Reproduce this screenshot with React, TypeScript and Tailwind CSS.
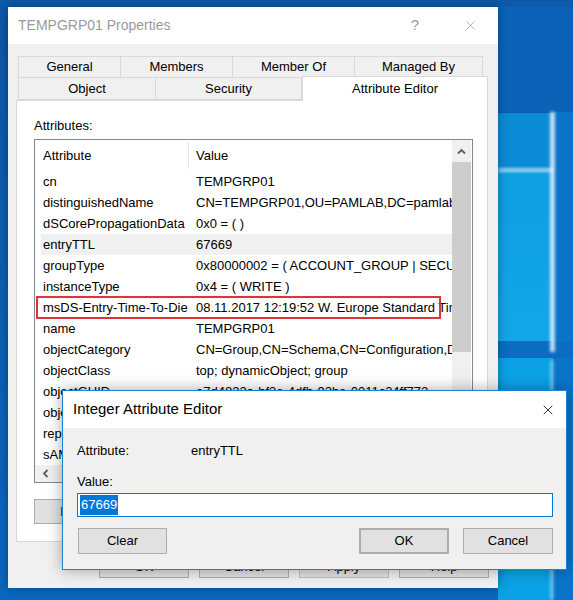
import { X } from "lucide-react";

const rows: [string, string][] = [
  ["cn", "TEMPGRP01"],
  ["distinguishedName", "CN=TEMPGRP01,OU=PAMLAB,DC=pamlab,DC=lab"],
  ["dSCorePropagationData", "0x0 = ( )"],
  ["entryTTL", "67669"],
  ["groupType", "0x80000002 = ( ACCOUNT_GROUP | SECURITY_ENABLED )"],
  ["instanceType", "0x4 = ( WRITE )"],
  ["msDS-Entry-Time-To-Die", "08.11.2017 12:19:52 W. Europe Standard Time"],
  ["name", "TEMPGRP01"],
  ["objectCategory", "CN=Group,CN=Schema,CN=Configuration,DC=pamlab,DC=lab"],
  ["objectClass", "top; dynamicObject; group"],
  ["objectGUID", "e7d4833a-bf3e-4dfb-93be-0011c34ff772"],
  ["objectSid", "S-1-5-21-3624189472-2017415611-1104"],
  ["replPropertyMetaData", "AttID  Ver  Loc.USN"],
  ["sAMAccountName", "TEMPGRP01"],
];

const topTabs = [
  { label: "General", w: "w-[103px]" },
  { label: "Members", w: "w-[113px]" },
  { label: "Member Of", w: "w-[123px]" },
  { label: "Managed By", w: "w-[129px]" },
];

function Wallpaper() {
  return (
    <svg className="absolute inset-0" width="573" height="600" viewBox="0 0 573 600">
      <defs>
        <linearGradient id="bg" x1="0" y1="0" x2="0" y2="1">
          <stop offset="0" stopColor="#0d58a8" />
          <stop offset="1" stopColor="#0a68c0" />
        </linearGradient>
        <linearGradient id="pane" x1="0" y1="0" x2="0" y2="1">
          <stop offset="0" stopColor="#0e9fe2" />
          <stop offset="1" stopColor="#12a6e8" />
        </linearGradient>
        <filter id="glow" x="-50%" y="-50%" width="200%" height="200%">
          <feGaussianBlur stdDeviation="1.6" />
        </filter>
      </defs>
      <rect width="573" height="600" fill="url(#bg)" />
      <rect x="498" y="0" width="75" height="112" fill="#0b62b6" />
      <rect x="553" y="112" width="20" height="488" fill="#0a74c9" />
      <rect x="498" y="113" width="55" height="58" fill="#0b8bd6" />
      <rect x="498" y="171" width="55" height="170" fill="url(#pane)" />
      <rect x="498" y="341" width="75" height="17" fill="#0a6dc2" />
      <rect x="498" y="358" width="55" height="242" fill="#0aa2e5" />
      <rect x="550" y="112" width="5" height="240" fill="#ffffff" opacity="0.75" filter="url(#glow)" />
      <rect x="498" y="168" width="55" height="4" fill="#ffffff" opacity="0.6" filter="url(#glow)" />
      <rect x="550" y="360" width="4" height="240" fill="#ffffff" opacity="0.35" filter="url(#glow)" />
      <rect x="0" y="0" width="573" height="7" fill="#0c5aa9" />
    </svg>
  );
}

function Btn({ label, className = "" }: { label: string; className?: string }) {
  return (
    <div
      className={`flex h-full items-center justify-center border border-[#adadad] bg-[#e1e1e1] text-[13px] text-black ${className}`}
    >
      {label}
    </div>
  );
}

function Chevron({ dir }: { dir: "up" | "left" }) {
  return (
    <svg width="9" height="9" viewBox="0 0 9 9" className={dir === "left" ? "-rotate-90" : ""}>
      <path d="M1 6.5 L4.5 3 L8 6.5" fill="none" stroke="#606060" strokeWidth="1.8" />
    </svg>
  );
}

function AttributeList() {
  return (
    <div className="flex h-[344px] w-[439px] flex-col border border-[#828790] bg-white">
      <div className="flex min-h-0 flex-1">
        <div className="flex w-[417px] flex-col overflow-hidden">
          {/* header */}
          <div className="flex h-[31px] shrink-0 items-center text-[13px]">
            <div className="w-[153px] pl-[8px]">Attribute</div>
            <div className="h-[27px] w-px bg-[#e5e5e5]" />
            <div className="pl-[7px]">Value</div>
          </div>
          {/* rows */}
          <div className="ml-[6px] flex flex-col">
            {rows.map(([attr, value]) => (
              <div
                key={attr}
                className={`relative flex h-[21px] shrink-0 items-center whitespace-nowrap text-[13px] ${
                  attr === "entryTTL" ? "bg-[#f0f0f0]" : ""
                }`}
              >
                <div className="w-[147px] shrink-0 pl-[2px]">{attr}</div>
                <div className="overflow-hidden pl-[8px]">{value}</div>
                {attr === "msDS-Entry-Time-To-Die" && (
                  <div className="absolute left-[-5px] top-[-1px] h-[23px] w-[405px] border-2 border-[#e0313c]" />
                )}
              </div>
            ))}
          </div>
        </div>
        {/* vertical scrollbar */}
        <div className="mr-px flex w-[19px] flex-col bg-[#f0f0f0]">
          <div className="flex h-[22px] items-center justify-center">
            <Chevron dir="up" />
          </div>
          <div className="h-[190px] bg-[#cdcdcd]" />
        </div>
      </div>
      {/* horizontal scrollbar */}
      <div className="flex h-[17px] shrink-0 items-center bg-[#f0f0f0] pl-[6px]">
        <Chevron dir="left" />
      </div>
    </div>
  );
}

function PropertiesWindow() {
  return (
    <div className="absolute left-[8px] top-[7px] flex h-[581px] w-[490px] flex-col shadow-[0_0_10px_rgba(0,0,0,0.35)]">
      {/* title bar */}
      <div className="flex h-[37px] shrink-0 items-center bg-white pl-[10px]">
        <span className="text-[14px] text-[#9a9a9a]">TEMPGRP01 Properties</span>
        <div className="ml-auto mr-[5px] flex h-full gap-[9px]">
          <div className="flex w-[46px] items-center justify-center text-[15px] text-[#9a9a9a]">?</div>
          <div className="flex w-[46px] items-center justify-center">
            <X className="h-[15px] w-[15px] text-[#9a9a9a]" strokeWidth={1.2} />
          </div>
        </div>
      </div>
      {/* body */}
      <div className="flex flex-1 flex-col bg-[#f0f0f0] pt-[12px]">
        <div className="ml-[10px] flex h-[22px]">
          {topTabs.map((t) => (
            <div
              key={t.label}
              className={`flex items-center justify-center border border-[#d9d9d9] text-[13px] ${t.w} -ml-px first:ml-0`}
            >
              {t.label}
            </div>
          ))}
        </div>
        <div className="ml-[10px] flex h-[22px] items-end">
          <div className="flex h-full w-[138px] items-center justify-center border border-t-0 border-[#d9d9d9] text-[13px]">
            Object
          </div>
          <div className="flex h-full w-[146px] items-center justify-center border border-l-0 border-t-0 border-[#d9d9d9] text-[13px]">
            Security
          </div>
          <div className="relative z-10 -mb-px flex h-[25px] w-[186px] items-start justify-center border border-b-0 border-[#d9d9d9] bg-white pt-[2px] text-[13px]">
            Attribute Editor
          </div>
        </div>
        {/* tab panel */}
        <div className="ml-[8px] flex h-[442px] w-[472px] flex-col border border-[#d9d9d9] bg-white pl-[17px] pt-[16px]">
          <div className="h-[17px] text-[13px] leading-[17px]">Attributes:</div>
          <div className="mt-[5px]">
            <AttributeList />
          </div>
          <div className="mt-[16px] flex h-[25px] items-center">
            <Btn label="Edit" className="w-[75px]" />
            <Btn label="Filter" className="ml-auto mr-[15px] w-[75px]" />
          </div>
        </div>
        {/* dialog buttons */}
        <div className="mt-[13px] flex h-[23px] justify-end gap-[10px] pr-[9px]">
          <Btn label="OK" className="w-[90px]" />
          <Btn label="Cancel" className="w-[90px]" />
          <Btn label="Apply" className="w-[90px] border-[#bfbfbf] bg-[#cccccc] text-[#838383]" />
          <Btn label="Help" className="w-[90px]" />
        </div>
      </div>
    </div>
  );
}

function IntegerEditor() {
  return (
    <div className="absolute left-[62px] top-[390px] z-20 flex h-[180px] w-[505px] flex-col border border-[#1883d7] shadow-[0_0_14px_rgba(0,0,0,0.35)]">
      <div className="flex h-[37px] shrink-0 items-center bg-white pl-[10px]">
        <span className="text-[15px] text-black">Integer Attribute Editor</span>
        <div className="ml-auto flex h-full w-[36px] items-center justify-center">
          <X className="h-[16px] w-[16px] text-black" strokeWidth={1.2} />
        </div>
      </div>
      <div className="flex flex-1 flex-col bg-[#f0f0f0] pl-[14px] pr-[13px] pt-[15px]">
        <div className="flex h-[16px] items-center text-[13px]">
          <div className="w-[114px]">Attribute:</div>
          <div>entryTTL</div>
        </div>
        <div className="mt-[15px] flex h-[16px] items-center text-[13px]">Value:</div>
        <div className="mt-[3px] flex h-[24px] w-[476px] items-center border border-[#0078d7] bg-white pl-[2px]">
          <span className="flex h-[20px] items-center bg-[#0078d7] px-px text-[13px] text-white">67669</span>
        </div>
        <div className="mt-[11px] flex h-[26px]">
          <Btn label="Clear" className="ml-px w-[89px]" />
          <Btn label="OK" className="ml-auto w-[90px] border-2 border-[#0078d7]" />
          <Btn label="Cancel" className="ml-[14px] w-[90px]" />
        </div>
      </div>
    </div>
  );
}

export default function App() {
  return (
    <div className="relative h-[600px] w-[573px] overflow-hidden font-['Liberation_Sans',Arial,sans-serif] text-black">
      <Wallpaper />
      <PropertiesWindow />
      <IntegerEditor />
    </div>
  );
}
